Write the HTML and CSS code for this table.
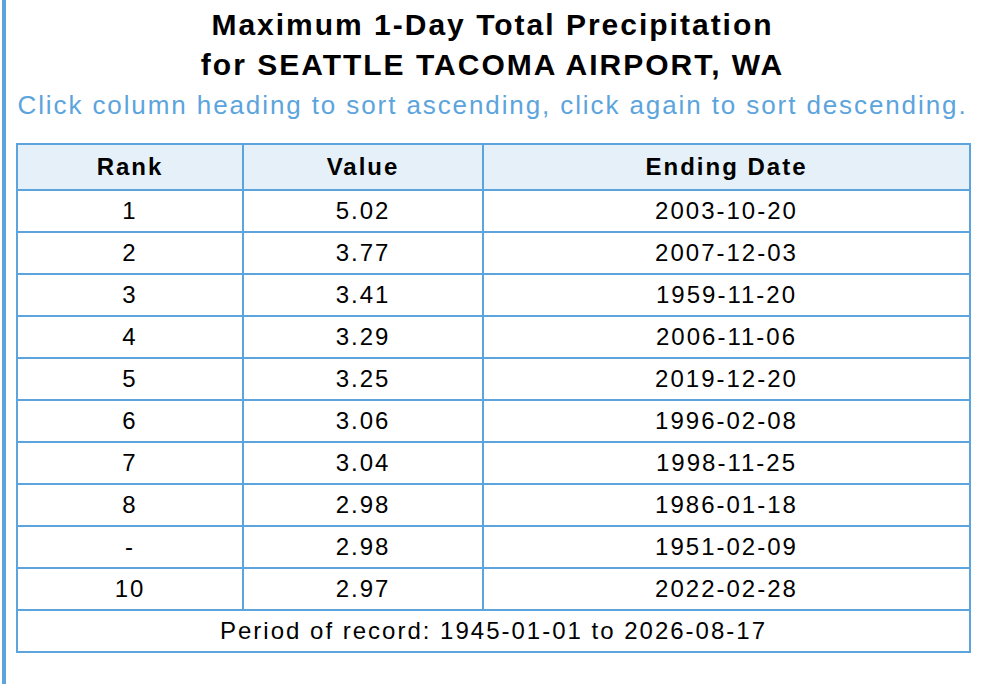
FILE: index.html
```html
<!DOCTYPE html>
<html>
<head>
<meta charset="utf-8">
<link rel="stylesheet" href="styles.css">
</head>
<body>
<div class="panel">
  <h1 class="title">Maximum 1-Day Total Precipitation<br>for SEATTLE TACOMA AIRPORT, WA</h1>
  <p class="hint">Click column heading to sort ascending, click again to sort descending.</p>
  <table class="ranks">
    <colgroup>
      <col class="c-rank">
      <col class="c-value">
      <col class="c-date">
    </colgroup>
    <thead>
      <tr><th>Rank</th><th>Value</th><th>Ending Date</th></tr>
    </thead>
    <tbody>
      <tr><td>1</td><td>5.02</td><td>2003-10-20</td></tr>
      <tr><td>2</td><td>3.77</td><td>2007-12-03</td></tr>
      <tr><td>3</td><td>3.41</td><td>1959-11-20</td></tr>
      <tr><td>4</td><td>3.29</td><td>2006-11-06</td></tr>
      <tr><td>5</td><td>3.25</td><td>2019-12-20</td></tr>
      <tr><td>6</td><td>3.06</td><td>1996-02-08</td></tr>
      <tr><td>7</td><td>3.04</td><td>1998-11-25</td></tr>
      <tr><td>8</td><td>2.98</td><td>1986-01-18</td></tr>
      <tr><td>-</td><td>2.98</td><td>1951-02-09</td></tr>
      <tr><td>10</td><td>2.97</td><td>2022-02-28</td></tr>
    </tbody>
    <tfoot>
      <tr><td colspan="3">Period of record: 1945-01-01 to 2026-08-17</td></tr>
    </tfoot>
  </table>
</div>
</body>
</html>
```

FILE: styles.css
```css
html, body {
  margin: 0;
  padding: 0;
  background: #ffffff;
}

body {
  font-family: "Liberation Sans", Arial, Helvetica, sans-serif;
  color: #000000;
  letter-spacing: 2px;
}

.panel {
  margin: 0 7px 0 2px;
  border-left: 4px solid #5ba4dd;
  padding: 5px 10px 30px 10px;
  min-height: 649px;
}

.title {
  margin: 0;
  font-size: 30px;
  line-height: 40px;
  font-weight: bold;
  text-align: center;
}

.hint {
  margin: 5px 0 0 0;
  font-size: 26px;
  line-height: 30px;
  color: #5ba4dd;
  text-align: center;
  letter-spacing: 1.9px;
}

.ranks {
  margin-top: 23px;
  width: 953px;
  border-collapse: collapse;
  table-layout: fixed;
  font-size: 24px;
}

.c-rank { width: 226px; }
.c-value { width: 240px; }
.c-date { width: 487px; }

.ranks th,
.ranks td {
  border: 2px solid #5ba4dd;
  text-align: center;
  padding: 0;
}

.ranks th {
  height: 44px;
  background: #e6f0f9;
  font-weight: bold;
}

.ranks td {
  height: 40px;
}
```
